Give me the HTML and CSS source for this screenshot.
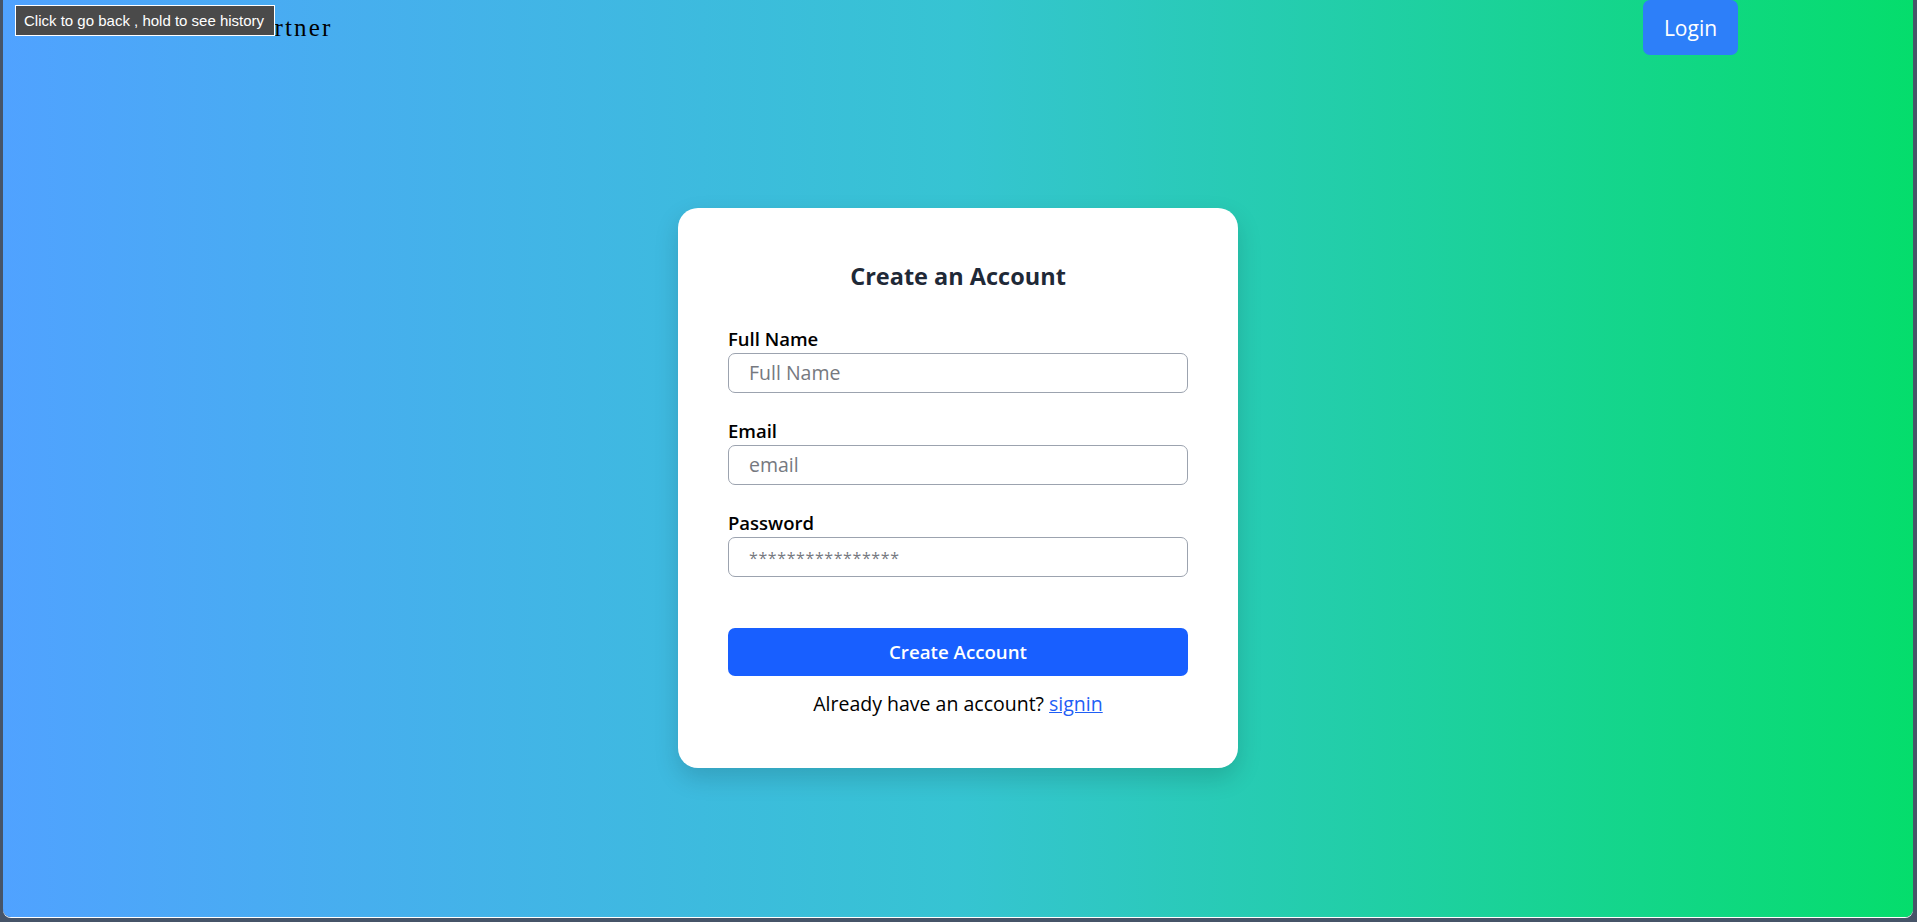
FILE: index.html
```html
<!DOCTYPE html>
<html lang="en">
<head>
<meta charset="utf-8">
<title>Create an Account</title>
<link rel="stylesheet" href="styles.css">
</head>
<body>
<div class="window">
  <nav class="navbar">
    <div class="brand">Partner</div>
    <button class="login-btn" type="button">Login</button>
  </nav>
  <main class="main">
    <form class="card">
      <h2 class="card-title">Create an Account</h2>
      <div class="field">
        <label class="field-label" for="name">Full Name</label>
        <input class="field-input" id="name" type="text" placeholder="Full Name">
      </div>
      <div class="field">
        <label class="field-label" for="email">Email</label>
        <input class="field-input" id="email" type="email" placeholder="email">
      </div>
      <div class="field">
        <label class="field-label" for="password">Password</label>
        <input class="field-input field-password" id="password" type="password" placeholder="****************">
      </div>
      <button class="submit-btn" type="button">Create Account</button>
      <p class="switch">Already have an account? <a class="switch-link" href="#">signin</a></p>
    </form>
  </main>
</div>
<div class="tooltip">Click to go back , hold to see history</div>
</body>
</html>
```

FILE: styles.css
```css
html, body {
  margin: 0;
  padding: 0;
}

body {
  background: #465468;
  height: 922px;
  overflow: hidden;
  font-family: "Open Sans", "Noto Sans", sans-serif;
}

.window {
  margin: 0 4px 0 3px;
  height: 917px;
  border-radius: 0 0 8px 8px;
  background: linear-gradient(to right, #50a2ff 0%, #36c4d2 50%, #05dd6c 100%);
  box-shadow: 0 1px 0 #ffffff;
  display: flex;
  flex-direction: column;
}

.navbar {
  height: 55px;
  display: flex;
  align-items: center;
  justify-content: space-between;
  padding: 0 175px 0 242px;
  flex: none;
}

.brand {
  font-family: "Liberation Serif", "DejaVu Serif", serif;
  font-size: 25px;
  letter-spacing: 2.2px;
  color: #000;
}

.login-btn {
  align-self: flex-start;
  height: 55px;
  width: 95px;
  border: none;
  border-radius: 7px;
  background: #2d7ff9;
  color: #fff;
  font-family: "Open Sans", sans-serif;
  font-size: 21px;
  padding: 0;
}

.main {
  flex: 1;
  display: flex;
  align-items: center;
  justify-content: center;
}

.card {
  width: 560px;
  box-sizing: border-box;
  padding: 50px 50px 50px;
  background: #fff;
  border-radius: 20px;
  box-shadow: 0 10px 25px rgba(0, 0, 0, 0.15);
  margin-top: 3px;
}

.card-title {
  margin: 0 0 31px;
  text-align: center;
  font-size: 23.5px;
  line-height: 36px;
  font-weight: 700;
  color: #1f2937;
}

.field {
  display: flex;
  flex-direction: column;
  margin-bottom: 24px;
}

.field:last-of-type {
  margin-bottom: 51px;
}

.field-label {
  font-size: 18.5px;
  line-height: 28px;
  font-weight: 600;
  color: #000;
}

.field-input {
  height: 40px;
  box-sizing: border-box;
  border: 1px solid #9ca3af;
  border-radius: 7px;
  padding: 0 20px;
  font-family: "Open Sans", sans-serif;
  font-size: 19.5px;
  color: #111;
  outline: none;
}

.field-input::placeholder {
  color: #76797f;
}

.field-password::placeholder {
  font-size: 16px;
  letter-spacing: 0.6px;
}

.submit-btn {
  display: block;
  width: 100%;
  height: 48px;
  border: none;
  border-radius: 7px;
  background: #185fff;
  color: #fff;
  font-family: "Open Sans", sans-serif;
  font-size: 18.7px;
  font-weight: 600;
}

.switch {
  margin: 14px 0 0;
  text-align: center;
  font-size: 19.5px;
  line-height: 28px;
  font-weight: 500;
  color: #000;
}

.switch-link {
  color: #1f5ef5;
  text-decoration: underline;
}

.tooltip {
  position: absolute;
  left: 15px;
  top: 5px;
  box-sizing: border-box;
  height: 31px;
  width: 260px;
  padding: 0 0 0 8px;
  border: 1px solid #ffffff;
  background: #4a4a4a;
  color: #fff;
  font-family: "Liberation Sans", Arial, sans-serif;
  font-size: 15px;
  line-height: 29px;
  white-space: nowrap;
  overflow: hidden;
}
```
